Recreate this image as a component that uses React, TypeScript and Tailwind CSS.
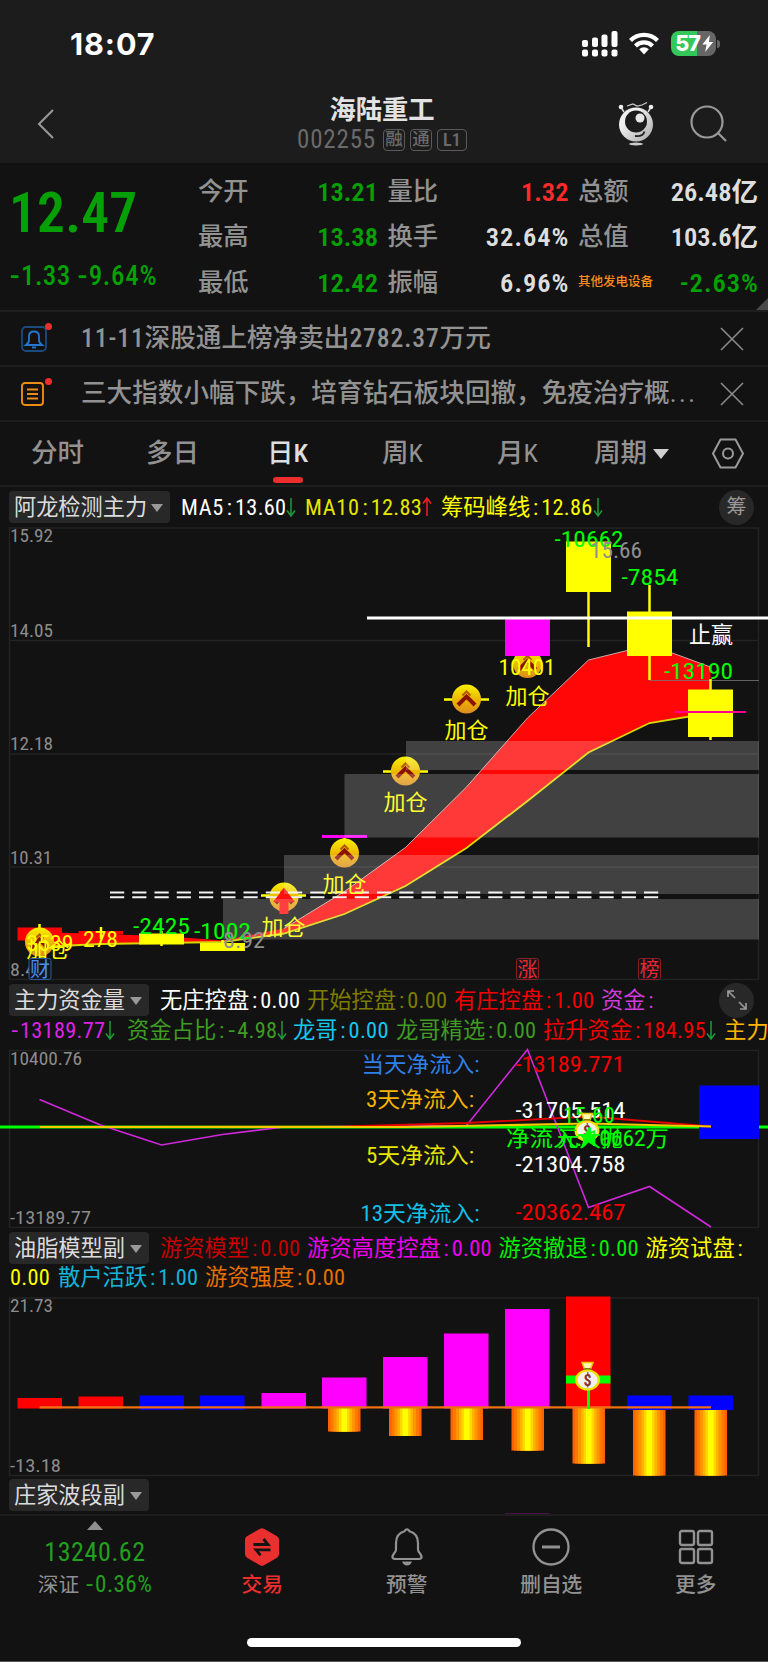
import type { ReactNode } from 'react';
import { clsx } from 'clsx';

type LegendEntry = { text: string; color: string; width: string; arrow?: 'up' | 'down' };

const quotes = [
  [
    { label: '今开', value: '13.21', color: 'text-[#05a005]' },
    { label: '最高', value: '13.38', color: 'text-[#05a005]' },
    { label: '最低', value: '12.42', color: 'text-[#05a005]' },
  ],
  [
    { label: '量比', value: '1.32', color: 'text-[#ff2a2a]' },
    { label: '换手', value: '32.64%', color: 'text-[#dedede]' },
    { label: '振幅', value: '6.96%', color: 'text-[#dedede]' },
  ],
  [
    { label: '总额', value: '26.48亿', color: 'text-[#dedede]' },
    { label: '总值', value: '103.6亿', color: 'text-[#dedede]' },
    { label: '其他发电设备', value: '-2.63%', color: 'text-[#05a005]', industry: true },
  ],
];

const mainLegend: LegendEntry[] = [
  { text: 'MA5:13.60', color: 'text-white', width: 'w-[124px]', arrow: 'down' },
  { text: 'MA10:12.83', color: 'text-[#e6e600]', width: 'w-[136px]', arrow: 'up' },
  { text: '筹码峰线:12.86', color: 'text-[#ffff00]', width: 'w-[164px]', arrow: 'down' },
];

const fundLegendTop: LegendEntry[] = [
  { text: '无庄控盘:0.00', color: 'text-white', width: 'w-[147px]' },
  { text: '开始控盘:0.00', color: 'text-[#7d7d00]', width: 'w-[147px]' },
  { text: '有庄控盘:1.00', color: 'text-[#f50000]', width: 'w-[147px]' },
  { text: '资金:', color: 'text-[#cf3bdc]', width: 'w-[60px]' },
];

const fundLegendBottom: LegendEntry[] = [
  { text: '-13189.77', color: 'text-[#dd22e6]', width: 'w-[117px]', arrow: 'down' },
  { text: '资金占比:-4.98', color: 'text-[#3f9c22]', width: 'w-[166px]', arrow: 'down' },
  { text: '龙哥:0.00', color: 'text-[#14c8ee]', width: 'w-[103px]' },
  { text: '龙哥精选:0.00', color: 'text-[#3f9c22]', width: 'w-[147px]' },
  { text: '拉升资金:184.95', color: 'text-[#f50000]', width: 'w-[181px]', arrow: 'down' },
  { text: '主力', color: 'text-[#ffb400]', width: 'w-[44px]' },
];

const modelLegendTop: LegendEntry[] = [
  { text: '游资模型:0.00', color: 'text-[#c80000]', width: 'w-[147px]' },
  { text: '游资高度控盘:0.00', color: 'text-[#f000f0]', width: 'w-[191.5px]' },
  { text: '游资撤退:0.00', color: 'text-[#00f000]', width: 'w-[147px]' },
  { text: '游资试盘:', color: 'text-[#ffff00]', width: 'w-[102px]' },
];

const modelLegendBottom: LegendEntry[] = [
  { text: '0.00', color: 'text-[#ffff00]', width: 'w-[48px]' },
  { text: '散户活跃:1.00', color: 'text-[#14b4dc]', width: 'w-[147px]' },
  { text: '游资强度:0.00', color: 'text-[#e87000]', width: 'w-[147px]' },
];

const upperBand: [number, number][] = [
  [39.5, 932], [100.5, 934], [161.5, 936], [222.5, 940.5], [284, 928.5], [344.5, 891.5],
  [405.5, 847.5], [466.5, 787], [527.5, 718], [588.5, 660], [649.5, 645], [671, 652.5], [710.5, 667],
];
const lowerBand: [number, number][] = [
  [39.5, 947], [100.5, 944], [161.5, 943], [222.5, 942], [284, 933.5], [344.5, 914],
  [405.5, 886], [466.5, 848], [527.5, 801], [588.5, 752.5], [649.5, 723], [710.5, 713],
];

const costBlocks = [
  { x: 406, y: 741, h: 29 },
  { x: 344.5, y: 774, h: 63.5 },
  { x: 284, y: 855, h: 39 },
  { x: 223, y: 899, h: 40.5 },
];

const modelBars = [
  { x: 17.5, top: 1398, bottom: 1408.5, color: '#ff0000' },
  { x: 78.5, top: 1396.5, bottom: 1408.5, color: '#ff0000' },
  { x: 139.5, top: 1395.5, bottom: 1410, color: '#0000ff' },
  { x: 200, top: 1395.5, bottom: 1410, color: '#0000ff' },
  { x: 261.5, top: 1393, bottom: 1408.5, color: '#ff00ff' },
  { x: 322, top: 1377.5, bottom: 1408.5, color: '#ff00ff' },
  { x: 383, top: 1357, bottom: 1408.5, color: '#ff00ff' },
  { x: 444, top: 1333.5, bottom: 1408.5, color: '#ff00ff' },
  { x: 505, top: 1309, bottom: 1408.5, color: '#ff00ff' },
  { x: 566, top: 1296.5, bottom: 1408.5, color: '#ff0000' },
  { x: 627, top: 1395.5, bottom: 1410, color: '#0000ff' },
  { x: 688.5, top: 1395.5, bottom: 1410, color: '#0000ff' },
];

const strengthBars = [
  { x: 328, top: 1408, bottom: 1431.5 },
  { x: 389, top: 1408, bottom: 1436 },
  { x: 450.5, top: 1408, bottom: 1440 },
  { x: 511.5, top: 1408, bottom: 1450.5 },
  { x: 572.5, top: 1408, bottom: 1463.5 },
  { x: 633, top: 1410, bottom: 1475.5 },
  { x: 694.5, top: 1410, bottom: 1475.5 },
];

// nested stripes, widest first
const stripes = [
  { inset: 0, color: '#ff6000' },
  { inset: 2.5, color: '#ff7800' },
  { inset: 5.5, color: '#ff9600' },
  { inset: 8.5, color: '#ffb400' },
  { inset: 11, color: '#ffd800' },
  { inset: 13.5, color: '#ffff00' },
];

const toPoints = (list: [number, number][]) => list.map((p) => p.join(',')).join(' ');

function Arrow({ dir }: { dir: 'up' | 'down' }) {
  return (
    <svg
      viewBox="0 0 10 22"
      className={clsx('h-[22px] w-[10px] shrink-0', dir === 'up' ? 'rotate-180 text-[#f01e28]' : 'text-[#1f9a3a]')}
      fill="none"
      stroke="currentColor"
      strokeWidth="1.5"
    >
      <path d="M5 2v18M1 14.5 5 20l4-5.5" />
    </svg>
  );
}

function LegendText({ text }: { text: string }) {
  const [name, value] = text.includes(':') ? text.split(':') : ['', text];
  return (
    <span className="flex items-center tracking-[0.3px]">
      {name && <span className={name.startsWith('MA') ? 'tracking-[0.7px]' : 'tracking-normal'}>{name}</span>}
      {text.includes(':') && <span className="w-[11px] text-center">:</span>}
      {value.startsWith('-') && <span className="w-[10px] scale-x-125 text-center">-</span>}
      <span>{value.replace('-', '')}</span>
    </span>
  );
}

function Legend({ items }: { items: LegendEntry[] }) {
  return (
    <div className="flex items-center whitespace-nowrap text-[22.3px] leading-none">
      {items.map((item) => (
        <span key={item.text} className={clsx('flex shrink-0 items-center', item.color, item.width)}>
          <LegendText text={item.text} />
          {item.arrow && <Arrow dir={item.arrow} />}
        </span>
      ))}
    </div>
  );
}

function IndicatorButton({ children, width }: { children: ReactNode; width: string }) {
  return (
    <button
      className={clsx(
        'flex h-8 shrink-0 items-center justify-between rounded bg-[#282828] pr-[7px] pl-[5px] text-[22.2px] leading-none whitespace-nowrap text-[#dcdcdc]',
        width,
      )}
    >
      {children}
      <svg viewBox="0 0 12 8" className="mt-0.5 h-2 w-3">
        <path d="M0 0h12L6 8z" fill="#999" />
      </svg>
    </button>
  );
}

function Label(props: {
  x: number;
  y: number;
  w?: number;
  fill: string;
  size?: number;
  medium?: boolean;
  children: string;
}) {
  const { x, y, w, fill, size = 22.5, medium = true, children } = props;
  return (
    <text x={x} y={y} fill={fill} fontSize={size} fontWeight={medium ? 440 : 400} textLength={w} lengthAdjust="spacingAndGlyphs">
      {children}
    </text>
  );
}

function Coin({ x, y }: { x: number; y: number }) {
  return (
    <g transform={`translate(${x} ${y})`}>
      <circle r="14.5" fill="url(#coin)" />
      <path d="M-8.500 6 0-2.500 8.500 6" fill="none" stroke="#8a1200" strokeWidth="4" />
      <path d="M-4-3.500 0-7.500 4-3.500" fill="none" stroke="#b55a00" strokeWidth="2" />
    </g>
  );
}

function MoneyBag({ x, y }: { x: number; y: number }) {
  return (
    <g transform={`translate(${x} ${y})`}>
      <path d="M-5.500-17.500H5.500L3-11H-3z" fill="#fff8b0" stroke="#e8c800" strokeWidth="1.500" />
      <path d="M-3-12H3L5-8H-5z" fill="#8a7a10" />
      <ellipse rx="12.500" ry="10.500" fill="#f0e000" />
      <ellipse rx="10" ry="8.500" fill="#f4f1ea" />
      <text y="5.500" textAnchor="middle" fontSize="16" fontWeight="700" fill="#8c3434">$</text>
    </g>
  );
}

function SquareBadge({ x, color, border, children }: { x: number; color: string; border: string; children: string }) {
  return (
    <g>
      <rect x={x} y="958.500" width="22" height="21" rx="2" fill="#12161c" stroke={border} />
      <text x={x + 11} y="976.500" textAnchor="middle" fontSize="20" fill={color}>{children}</text>
    </g>
  );
}

function MainChart() {
  return (
    <svg viewBox="0 527 768 454" className="block h-[454px] w-full">
      <defs>
        <linearGradient id="coin" x1="0" y1="0" x2="0" y2="1">
          <stop offset="0" stopColor="#f8f000" />
          <stop offset="0.550" stopColor="#ecb400" />
          <stop offset="1" stopColor="#dc8c20" />
        </linearGradient>
      </defs>
      <g fill="none" stroke="#232323" strokeWidth="1.500">
        <rect x="9.500" y="528" width="749" height="451.500" />
        <path d="M9 640.500H759M9 754H759M9 867H759" />
      </g>
      <g>
        <Label x={10} y={542} w={43} size={18} fill="#8c8c8c" medium={false}>15.92</Label>
        <Label x={10} y={637} w={43} size={18} fill="#8c8c8c" medium={false}>14.05</Label>
        <Label x={10} y={750} w={43} size={18} fill="#8c8c8c" medium={false}>12.18</Label>
        <Label x={10} y={863.5} w={42} size={18} fill="#8c8c8c" medium={false}>10.31</Label>
        <Label x={10} y={976} w={35} size={18} fill="#8c8c8c" medium={false}>8.44</Label>
      </g>
      <polygon points={toPoints([...upperBand, ...[...lowerBand].reverse()])} fill="#ff0707" />
      <polyline points={toPoints(upperBand.slice(4))} fill="none" stroke="#c8a8a8" />
      <polyline points={toPoints(lowerBand)} fill="none" stroke="#d8d800" strokeWidth="1.800" />
      <rect x="17.500" y="927.500" width="44.500" height="13" fill="#ff0000" />
      <rect x="78.500" y="931" width="44.500" height="3.500" fill="#ff0000" />
      <path d="M649.500 680.500H759" stroke="#777" strokeWidth="0.800" />
      {/* volume candles */}
      <g stroke="#ffff00" strokeWidth="2.500" fill="#ffff00">
        <path d="M39.500 924v6M101 927v12M161.500 931v15M222.500 940v11M588.500 592v55M649.500 585v95M710.500 679v61" />
        <g stroke="none">
          <rect x="139" y="933.500" width="45" height="11" />
          <rect x="200" y="943" width="45" height="8" />
          <rect x="566" y="541.500" width="45" height="50.500" />
          <rect x="627" y="611.500" width="45" height="44.500" />
          <rect x="688" y="689.500" width="45" height="47.500" />
        </g>
        <path d="M261 895.500h45M383 771.500h45M444 699.500h45M344.500 838v4" />
      </g>
      <path d="M322 836.500h45" stroke="#ff00ff" strokeWidth="3" />
      <path d="M674.500 712h71.500" stroke="#ff0090" strokeWidth="2.200" />
      <Coin x={39.5} y={942} />
      <Coin x={284} y={897} />
      <Coin x={344.5} y={853} />
      <Coin x={405.5} y={771} />
      <Coin x={466.5} y={699} />
      <Coin x={527.5} y={663.5} />
      <rect x="505" y="619" width="45" height="37" fill="#ff00ff" />
      <g fill="none" stroke="#f2f2f2" strokeWidth="2" strokeDasharray="14.200 8.050">
        <path d="M110 892.500H659M110 897.300H659" />
      </g>
      <path d="m284 888 11 14h-6.500v12h-9v-12H273z" fill="#ff1010" />
      <Label x={505.5} y={704} w={44} size={22} fill="#ffff00" medium={false}>加仓</Label>
      <Label x={444.5} y={738} w={44} size={22} fill="#ffff00" medium={false}>加仓</Label>
      <Label x={383.5} y={810} w={44} size={22} fill="#ffff00" medium={false}>加仓</Label>
      <Label x={322.5} y={892} w={44} size={22} fill="#ffff00" medium={false}>加仓</Label>
      <Label x={261.5} y={934.5} w={44} size={22} fill="#ffff00" medium={false}>加仓</Label>
      <Label x={26.5} y={957} w={43} size={22} fill="#ffff00" medium={false}>加仓</Label>
      {costBlocks.map((b) => (
        <rect key={b.y} x={b.x} y={b.y} width={759 - b.x} height={b.h} fill="#fff" fillOpacity="0.200" />
      ))}
      <path d="M367 618H768" stroke="#fff" strokeWidth="2.800" />
      <Label x={554.5} y={547} w={69} fill="#00ff00">-10662</Label>
      <Label x={590} y={558} w={52} fill="#8f8f8f">15.66</Label>
      <Label x={621.5} y={585} w={57} fill="#00ff00">-7854</Label>
      <Label x={664} y={678.5} w={69} fill="#00ff00">-13190</Label>
      <Label x={689} y={642.5} w={44} fill="#ffffff" medium={false}>止赢</Label>
      <Label x={498.5} y={675} w={57} fill="#ffff00">10401</Label>
      <Label x={133} y={933.5} w={57} fill="#00ff00">-2425</Label>
      <Label x={194} y={939} w={57} fill="#00ff00">-1002</Label>
      <Label x={223} y={948} w={42} fill="#8f8f8f">8.92</Label>
      <Label x={83} y={946.5} w={35} fill="#ffff00">278</Label>
      <Label x={26.5} y={950.5} w={47} fill="#ffff00">3539</Label>
      <SquareBadge x={29} color="#4a8ef0" border="#2a5c9c">财</SquareBadge>
      <SquareBadge x={516.5} color="#e8282c" border="#8a2024">涨</SquareBadge>
      <SquareBadge x={638.5} color="#e8282c" border="#8a2024">榜</SquareBadge>
    </svg>
  );
}

function FundChart() {
  return (
    <svg viewBox="0 1046 768 184" className="block h-[184px] w-full">
      <rect x="9.500" y="1050.500" width="749" height="177" fill="none" stroke="#232323" strokeWidth="1.500" />
      <Label x={10} y={1064.5} w={72} size={18} fill="#8c8c8c" medium={false}>10400.76</Label>
      <Label x={10} y={1223.5} w={81} size={18} fill="#8c8c8c" medium={false}>-13189.77</Label>
      <path d="M0 1127H768" stroke="#00ff00" strokeWidth="2.800" />
      <rect x="699" y="1085.500" width="60" height="53.500" fill="#0000ff" />
      <polyline points="39.500,1099.500 100.500,1125 161.500,1145 222.500,1134.500 284,1127 344.500,1126.500 466.500,1125.500 527.500,1049.500 588.500,1207.500 649.500,1186.500 711,1227" fill="none" stroke="#d028dc" strokeWidth="1.600" />
      <polyline points="39.500,1127 344.500,1126.500 466.500,1123 588.500,1116.500 711,1126.500" fill="none" stroke="#e60000" strokeWidth="1.800" />
      <polyline points="39.500,1127 405.500,1127 588.500,1123.500 711,1126.500" fill="none" stroke="#f5c800" strokeWidth="2.200" />
      <g>
        <Label x={361.5} y={1072} w={118} size={22} fill="#2f80e8" medium={false}>当天净流入:</Label>
        <Label x={366} y={1107} w={108} size={22} fill="#f5b400" medium={false}>3天净流入:</Label>
        <Label x={366} y={1163} w={108} size={22} fill="#e6e600" medium={false}>5天净流入:</Label>
        <Label x={360.5} y={1221} w={119} size={22} fill="#14c0e6" medium={false}>13天净流入:</Label>
      </g>
      <Label x={515.5} y={1071.5} w={109} fill="#f50000">-13189.771</Label>
      <Label x={515.5} y={1118} w={110} fill="#ffffff">-31705.514</Label>
      <Label x={515.5} y={1172} w={110} fill="#ffffff">-21304.758</Label>
      <Label x={515.5} y={1219.5} w={110} fill="#f50000">-20362.467</Label>
      <Label x={563} y={1123} w={52} fill="#00ff00">15.60</Label>
      <MoneyBag x={587} y={1131} />
      <Label x={506} y={1145.500} w={163} size={22} fill="#00ff00" medium={false}>净流入:-10662万</Label>
      <Label x={557} y={1145.500} w={66} size={22} fill="#00ff00" medium={false}>元大抛</Label>
      <path d="m588.500 1127 3.200 7h7.500l-6 5 2.500 8-7.200-4.500-7.200 4.500 2.500-8-6-5h7.500z" fill="#00ff00" />
    </svg>
  );
}

function ModelChart() {
  return (
    <svg viewBox="0 1295 768 184" className="block h-[184px] w-full">
      <rect x="9.500" y="1298" width="749" height="177.500" fill="none" stroke="#232323" strokeWidth="1.500" />
      <Label x={10} y={1312} w={43} size={18} fill="#8c8c8c" medium={false}>21.73</Label>
      <Label x={10} y={1471.5} w={51} size={18} fill="#8c8c8c" medium={false}>-13.18</Label>
      {modelBars.map((bar) => (
        <rect key={bar.x} x={bar.x} y={bar.top} width="44.500" height={bar.bottom - bar.top} fill={bar.color} />
      ))}
      {strengthBars.map((bar) =>
        stripes.map((s) => (
          <rect
            key={`${bar.x}-${s.inset}`}
            x={bar.x + s.inset}
            y={bar.top}
            width={32.5 - s.inset * 2}
            height={bar.bottom - bar.top}
            fill={s.color}
          />
        )),
      )}
      <path d="M39.500 1407.300H711" stroke="#f07010" strokeWidth="2.200" />
      <rect x="566" y="1375.500" width="44.500" height="8" fill="#00ff00" />
      <path d="M588.500 1385v24" stroke="#00ff00" strokeWidth="3" />
      <MoneyBag x={587.5} y={1380} />
    </svg>
  );
}

function StatusBar() {
  return (
    <div className="flex h-[87px] items-center justify-between pr-[48px] pl-[70px]">
      <span className="font-[Inter] text-[30.500px] font-bold tracking-[0.900px] text-white">18:07</span>
      <div className="flex items-center">
        <svg viewBox="0 0 36 26" className="h-[26px] w-9" fill="#fff">
          <rect x="0" y="9" width="6" height="7" rx="2" />
          <rect x="10" y="6.500" width="6" height="9.500" rx="2" />
          <rect x="19.500" y="3.500" width="6" height="12.500" rx="2" />
          <rect x="29.500" y="0" width="6" height="16" rx="2" />
          <rect x="0" y="18.500" width="6" height="7" rx="2" />
          <rect x="10" y="18.500" width="6" height="7" rx="2" />
          <rect x="19.500" y="18.500" width="6" height="7" rx="2" />
          <rect x="29.500" y="18.500" width="6" height="7" rx="2" />
        </svg>
        <svg viewBox="0 0 30 23" className="ml-[11px] h-[23px] w-[30px]" fill="none" stroke="#fff" strokeWidth="4.200">
          <path d="M1.500 8.500a19 19 0 0 1 27 0" />
          <path d="M6.500 14a12 12 0 0 1 17 0" />
          <path d="M15 22.500l-4.800-5.200a6.800 6.800 0 0 1 9.600 0z" fill="#fff" stroke="none" />
        </svg>
        <div className="ml-3 flex h-[25px] w-[45px] items-center justify-center rounded-[8px] bg-[linear-gradient(90deg,#34c759_57%,#666_57%)] pl-0.5 font-[Inter] text-[21.500px] font-extrabold tracking-[-1.200px] text-white">
          57
          <svg viewBox="0 0 12 18" className="ml-0.5 h-[17px] w-[12px]">
            <path d="M8 0 0 10h4.500L3 18l8.500-10.500H7z" fill="#fff" />
          </svg>
        </div>
        <div className="ml-px h-2 w-[3px] rounded-r-full bg-[#666]" />
      </div>
    </div>
  );
}

function Mascot() {
  return (
    <svg viewBox="0 0 36 44" className="h-11 w-9">
      <defs>
        <linearGradient id="body" x1="0" y1="0" x2="1" y2="1">
          <stop offset="0.300" stopColor="#f0f0f0" />
          <stop offset="1" stopColor="#a8a8a8" />
        </linearGradient>
      </defs>
      <path d="M6 10 3.500 6M30 10l2.500-4" stroke="#ddd" strokeWidth="1.500" />
      <circle cx="3" cy="5" r="2.300" fill="#eee" />
      <circle cx="33" cy="5" r="2.300" fill="#eee" />
      <path d="m9 4 6-2 4 2 5-1 5-2.500" fill="none" stroke="#ccc" strokeWidth="1.200" />
      <circle cx="18" cy="22.500" r="17" fill="url(#body)" />
      <circle cx="18" cy="19.500" r="11" fill="#1c1c1c" />
      <circle cx="22" cy="16" r="4.500" fill="#e8e8e8" />
      <path d="M17 34q8 1 9.500-4.500" fill="none" stroke="#222" strokeWidth="1.800" />
      <ellipse cx="18" cy="42" rx="7" ry="1.500" fill="#ccc" />
    </svg>
  );
}

function TopNav() {
  return (
    <div className="grid h-[73px] grid-cols-[1fr_auto_1fr] items-center pr-[41px] pl-[37px]">
      <svg viewBox="0 0 17 30" className="h-[30px] w-[17px]" fill="none" stroke="#9a9a9a" strokeWidth="2">
        <path d="M16 1 2 15l14 14" />
      </svg>
      <div className="flex flex-col items-center">
        <h1 className="text-[26.300px] leading-[32px] font-bold text-[#e2e2e2]">海陆重工</h1>
        <div className="flex items-center gap-[5px] text-[#6a6a6a]">
          <span className="text-[25px] leading-7 tracking-[0.800px]">002255</span>
          <span className="ml-0.5 flex h-[22px] w-[22px] items-center justify-center rounded border-[1.500px] border-[#5a5a5a] text-[17.500px] leading-none font-medium">融</span>
          <span className="flex h-[22px] w-[22px] items-center justify-center rounded border-[1.500px] border-[#5a5a5a] text-[17.500px] leading-none font-medium">通</span>
          <span className="flex h-[22px] w-[30px] items-center justify-center rounded border-[1.500px] border-[#5a5a5a] text-[18px] leading-none font-semibold">L1</span>
        </div>
      </div>
      <div className="flex items-center justify-end gap-9">
        <Mascot />
        <svg viewBox="0 0 37 37" className="h-[37px] w-[37px]" fill="none" stroke="#9a9a9a" strokeWidth="2.200">
          <circle cx="17" cy="17" r="15.500" />
          <path d="m28 28 8 8" />
        </svg>
      </div>
    </div>
  );
}

function QuotePanel() {
  return (
    <section className="relative flex h-[149px] border-b-2 border-[#1e1e1e]">
      <div className="w-[198px] pl-[9px] text-[#05a005]">
        <div className="pt-[19px] text-[55.500px] leading-[64px] font-semibold tracking-[0.200px]">12.47</div>
        <div className="flex gap-1.5 pt-3.5 text-[27px] leading-8 font-medium whitespace-nowrap">
          <span className="flex tracking-[0.400px]">
            <span className="w-3 scale-x-125 text-center">-</span>1.33
          </span>
          <span className="flex tracking-[0.700px]">
            <span className="w-3 scale-x-125 text-center">-</span>9.64%
          </span>
        </div>
      </div>
      <div className="grid flex-1 grid-cols-[180px_181px_180px] gap-x-[9.500px] pt-1.5">
        {quotes.map((column, i) => (
          <div key={i}>
            {column.map((q) => (
              <div key={q.label} className="flex h-[45.500px] items-center justify-between whitespace-nowrap">
                <span className={'industry' in q ? 'text-[12.500px] font-medium text-[#ff8c1a]' : 'text-[25.300px] font-[450] text-[#929292]'}>
                  {q.label}
                </span>
                <span className={clsx('text-[26.500px] font-semibold', q.color, q.value.endsWith('%') && 'mr-[-1px] tracking-[1px]')}>
                  {q.value}
                </span>
              </div>
            ))}
          </div>
        ))}
      </div>
      <div className="absolute right-0 bottom-0 h-3 w-3 bg-[#4a4a4a] [clip-path:polygon(100%_0,100%_100%,0_100%)]" />
    </section>
  );
}

function NewsRow({ icon, children }: { icon: ReactNode; children: ReactNode }) {
  return (
    <div className="flex h-[55px] items-center border-b-2 border-[#1e1e1e] pr-6 pl-[21px] text-[#929292]">
      <div className="relative w-[60px]">
        {icon}
        <span className="absolute top-[-3px] left-6 h-[7px] w-[7px] rounded-full bg-[#ee2e2e]" />
      </div>
      <p className="flex-1 text-[25.600px] font-[450] whitespace-nowrap">{children}</p>
      <svg viewBox="0 0 24 24" className="h-6 w-6" fill="none" stroke="#8a8a8a" strokeWidth="1.600">
        <path d="m1 1 22 22M23 1 1 23" />
      </svg>
    </div>
  );
}

function PeriodTabs() {
  const tabs = ['分时', '多日', '日K', '周K', '月K'];
  return (
    <nav className="flex h-[65px] items-center border-b-2 border-[#1e1e1e] text-[26.500px] font-[450] text-[#929292]">
      {tabs.map((tab) => (
        <div key={tab} className="relative flex h-full w-[115px] items-center justify-center">
          <span className={clsx('leading-none', tab === '日K' && 'font-medium text-[#dedede]')}>{tab}</span>
          {tab === '日K' && <span className="absolute bottom-0.5 h-1.5 w-[30px] rounded-full bg-[#ee2e2e]" />}
        </div>
      ))}
      <div className="flex flex-1 items-center pl-[19px] leading-none">
        周期
        <svg viewBox="0 0 16 10" className="ml-1.5 h-2.5 w-4">
          <path d="M0 0h16L8 10z" fill="#cfcfcf" />
        </svg>
      </div>
      <svg viewBox="0 0 32 31" className="mr-6 h-[31px] w-8" fill="none" stroke="#9a9a9a" strokeWidth="2">
        <path d="M8.500 1.500h15l7.500 14-7.500 14h-15L1 15.500z" />
        <circle cx="16" cy="15.500" r="5" />
      </svg>
    </nav>
  );
}

function TabItem({ icon, label, active }: { icon: ReactNode; label: string; active?: boolean }) {
  return (
    <div className={clsx('flex flex-1 flex-col items-center pt-3', active ? 'font-medium text-[#ee2e2e]' : 'font-[450] text-[#929292]')}>
      {icon}
      <span className="mt-[3px] text-[20.700px] leading-[32px]">{label}</span>
    </div>
  );
}

function BottomBar() {
  return (
    <footer className="flex h-[148px] flex-col justify-between border-t-2 border-b border-t-[#1e1e1e] border-b-[#555] pb-3.5">
      <div className="flex">
        <div className="flex w-[190px] flex-col items-center pt-[5px]">
          <svg viewBox="0 0 16 9" className="h-[9px] w-4">
            <path d="M8 0l8 9H0z" fill="#8f8f8f" />
          </svg>
          <span className="mt-[7px] text-[26px] leading-[30px] tracking-[0.600px] text-[#22a01e]">13240.62</span>
          <span className="mt-[5px] flex items-center gap-1.5 text-[20.700px] leading-[26px] text-[#8f8f8f]">
            深证
            <span className="flex text-[23px] tracking-[0.500px] text-[#22a01e]">
              <span className="w-[10px] scale-x-125 text-center">-</span>0.36%
            </span>
          </span>
        </div>
        <TabItem
          active
          label="交易"
          icon={
            <svg viewBox="0 0 36 38" className="h-[38px] w-9">
              <path d="M16 .8q2-1.200 4 0l13 7.500q2 1.200 2 3.500v14.400q0 2.300-2 3.500l-13 7.500q-2 1.200-4 0L3 29.700q-2-1.200-2-3.500V11.800q0-2.300 2-3.500z" fill="#ea2f2f" />
              <path d="M9.500 16.500h14.500L19.500 11M26.500 21.800H12l4.500 5.500" fill="none" stroke="#141414" strokeWidth="2.800" />
            </svg>
          }
        />
        <TabItem
          label="预警"
          icon={
            <svg viewBox="0 0 34 38" className="h-[38px] w-[34px]" fill="none" stroke="#929292" strokeWidth="2.200">
              <path d="M14.500 3.200Q17-.5 19.500 3.200C26 5 28 9.500 28 15v6.500q0 2 2 4 4 5.500-2 5.500H6q-6 0-2-5.500 2-2 2-4V15C6 9.500 8 5 14.500 3.200z" />
              <path d="M12 33.500h10q-1.500 4-5 4t-5-4z" fill="#929292" stroke="none" />
            </svg>
          }
        />
        <TabItem
          label="删自选"
          icon={
            <svg viewBox="0 0 38 38" className="h-[38px] w-[38px]" fill="none" stroke="#929292" strokeWidth="2.300">
              <circle cx="19" cy="19" r="17.500" />
              <path d="M10 19h18" strokeWidth="3" />
            </svg>
          }
        />
        <TabItem
          label="更多"
          icon={
            <svg viewBox="0 0 36 38" className="h-[38px] w-9" fill="none" stroke="#929292" strokeWidth="2.400">
              <rect x="2" y="3" width="14" height="14" rx="2" />
              <rect x="20" y="3" width="14" height="14" rx="2" />
              <rect x="2" y="21" width="14" height="14" rx="2" />
              <rect x="20" y="21" width="14" height="14" rx="2" />
            </svg>
          }
        />
      </div>
      <div className="mx-auto h-[9px] w-[274px] rounded-full bg-white" />
    </footer>
  );
}

export default function App() {
  return (
    <div className="h-[1662px] w-[768px] overflow-hidden bg-[#121212] font-['Roboto','Noto_Sans_CJK_SC',sans-serif] font-stretch-semi-condensed">
      <header className="h-[163px] bg-[#1c1c1c]">
        <StatusBar />
        <TopNav />
      </header>
      <QuotePanel />
      <NewsRow
        icon={
          <svg viewBox="0 0 26 26" className="h-[26px] w-[26px]" fill="none" stroke="#2478d0" strokeWidth="1.800">
            <rect x="1" y="1" width="24" height="24" rx="4" stroke="#1c4a7c" />
            <path d="M5 19h16q-3-2-3-5v-3.500q0-5-5-5t-5 5V14q0 3-3 5z" />
            <path d="M11 21.500h4" />
          </svg>
        }
      >
        <span className="font-medium tracking-[0.900px]">11-11</span>深股通上榜净卖出
        <span className="font-medium tracking-[0.900px]">2782.37</span>万元
      </NewsRow>
      <NewsRow
        icon={
          <svg viewBox="0 0 26 26" className="h-[26px] w-[26px]" fill="none" stroke="#ec8c14" strokeWidth="1.900">
            <rect x="1" y="2" width="21" height="22" rx="3" />
            <path d="M6 8.500h11M6 13h11M6 17.500h11" />
          </svg>
        }
      >
        三大指数小幅下跌，培育钻石板块回撤，免疫治疗概<span className="tracking-[2.600px]">...</span>
      </NewsRow>
      <PeriodTabs />

      <div className="flex h-10 items-center pr-3.5 pl-[9px]">
        <IndicatorButton width="w-[161px]">阿龙检测主力</IndicatorButton>
        <div className="ml-[11px] flex-1">
          <Legend items={mainLegend} />
        </div>
        <span className="flex h-[35px] w-[35px] items-center justify-center rounded-full bg-[#282828] text-[20px] leading-none text-[#999]">筹</span>
      </div>
      <MainChart />

      <div className="h-[65px] pt-[3px] pl-[9px]">
        <div className="flex h-8 items-center pr-3.5">
          <IndicatorButton width="w-[140px]">主力资金量</IndicatorButton>
          <div className="ml-[11px] flex-1">
            <Legend items={fundLegendTop} />
          </div>
          <span className="flex h-[35px] w-[35px] shrink-0 items-center justify-center rounded-full bg-[#282828]">
            <svg viewBox="0 0 20 20" className="h-5 w-5" fill="none" stroke="#999" strokeWidth="1.700">
              <path d="M1 7V1h6M1.500 1.500 8 8M19 13v6h-6M18.500 18.500 12 12" />
            </svg>
          </span>
        </div>
        <div className="flex h-7 items-center pl-px">
          <Legend items={fundLegendBottom} />
        </div>
      </div>
      <FundChart />

      <div className="h-[65px] pt-0.5 pl-[9px]">
        <div className="flex h-8 items-center">
          <IndicatorButton width="w-[140px]">油脂模型副</IndicatorButton>
          <div className="ml-[11px]">
            <Legend items={modelLegendTop} />
          </div>
        </div>
        <div className="flex h-[26px] items-center pl-px">
          <Legend items={modelLegendBottom} />
        </div>
      </div>
      <ModelChart />

      <div className="flex h-[35px] flex-col justify-between pl-[9px]">
        <IndicatorButton width="w-[140px]">庄家波段副</IndicatorButton>
        <div className="ml-[496px] h-px w-[45px] bg-[#4a104a]" />
      </div>
      <BottomBar />
    </div>
  );
}
